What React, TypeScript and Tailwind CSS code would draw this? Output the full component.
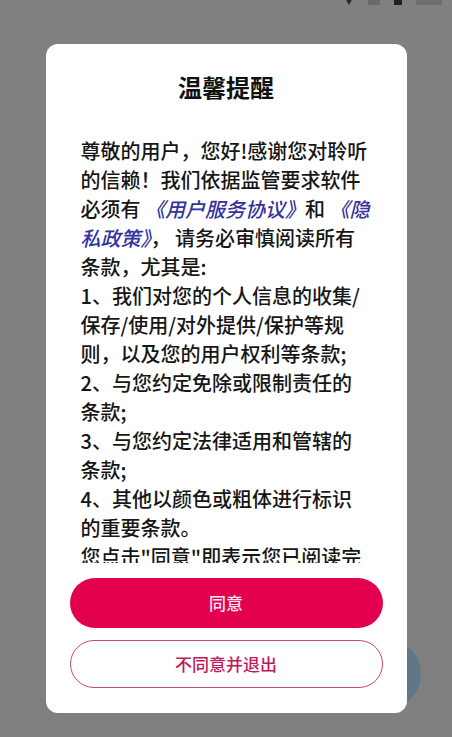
import type { ReactNode } from 'react';

const font = { fontFamily: '"Noto Sans CJK SC", "Noto Sans", sans-serif' };

function Link({ children }: { children: ReactNode }) {
  return <span className="italic text-[#33329e]">{children}</span>;
}

const lines: ReactNode[] = [
  '尊敬的用户，您好!感谢您对聆听',
  '的信赖！我们依据监管要求软件',
  <>
    必须有 <Link>《用户服务协议》</Link>和 <Link>《隐</Link>
  </>,
  <>
    <Link>私政策》</Link>， 请务必审慎阅读所有
  </>,
  '条款，尤其是:',
  '1、我们对您的个人信息的收集/',
  '保存/使用/对外提供/保护等规',
  '则，以及您的用户权利等条款;',
  '2、与您约定免除或限制责任的',
  '条款;',
  '3、与您约定法律适用和管辖的',
  '条款;',
  '4、其他以颜色或粗体进行标识',
  '的重要条款。',
  '您点击"同意"即表示您已阅读完',
];

export default function App() {
  return (
    <div className="relative h-screen overflow-hidden bg-[#808080]" style={font}>
      {/* status bar, mostly cut off at the top */}
      <div className="flex h-[5px] items-end justify-end gap-[14px] overflow-hidden pr-[10px]">
        <div className="h-0 w-0 border-x-[5px] border-t-[9px] border-x-transparent border-t-[#2a2a2a]" />
        <div className="h-[12px] w-[12px] bg-[#6a6a6a]" />
        <div className="h-[14px] w-[8px] bg-[#222]" />
        <div className="h-[14px] w-[26px] bg-[#6e6e6e]" />
      </div>

      {/* floating button behind the overlay */}
      <div className="absolute left-[349px] top-[638px] h-[72px] w-[72px] rounded-full bg-[#5f7787]" />

      <div className="relative mx-auto mt-[39px] w-[361px] rounded-[12px] bg-white pb-[25px] pt-[27px]">
        <h2 className="text-center text-[24px] font-bold leading-[32px] text-[#111]">温馨提醒</h2>

        <div className="mt-[33px] h-[427px] overflow-hidden px-[35px] text-[20px] font-medium leading-[29px] text-[#161616]">
          {lines.map((line, i) => (
            <div key={i} className="whitespace-nowrap">
              {line}
            </div>
          ))}
        </div>

        <div className="mx-[24px] mt-[15px] flex flex-col gap-[12px]">
          <button className="h-[50px] rounded-full bg-[#e3004f] text-[17px] font-medium text-[#fde8ef]">同意</button>
          <button className="h-[48px] rounded-full border-[1.5px] border-[#c9477a] bg-white text-[17px] font-medium text-[#c2185b]">
            不同意并退出
          </button>
        </div>
      </div>
    </div>
  );
}
